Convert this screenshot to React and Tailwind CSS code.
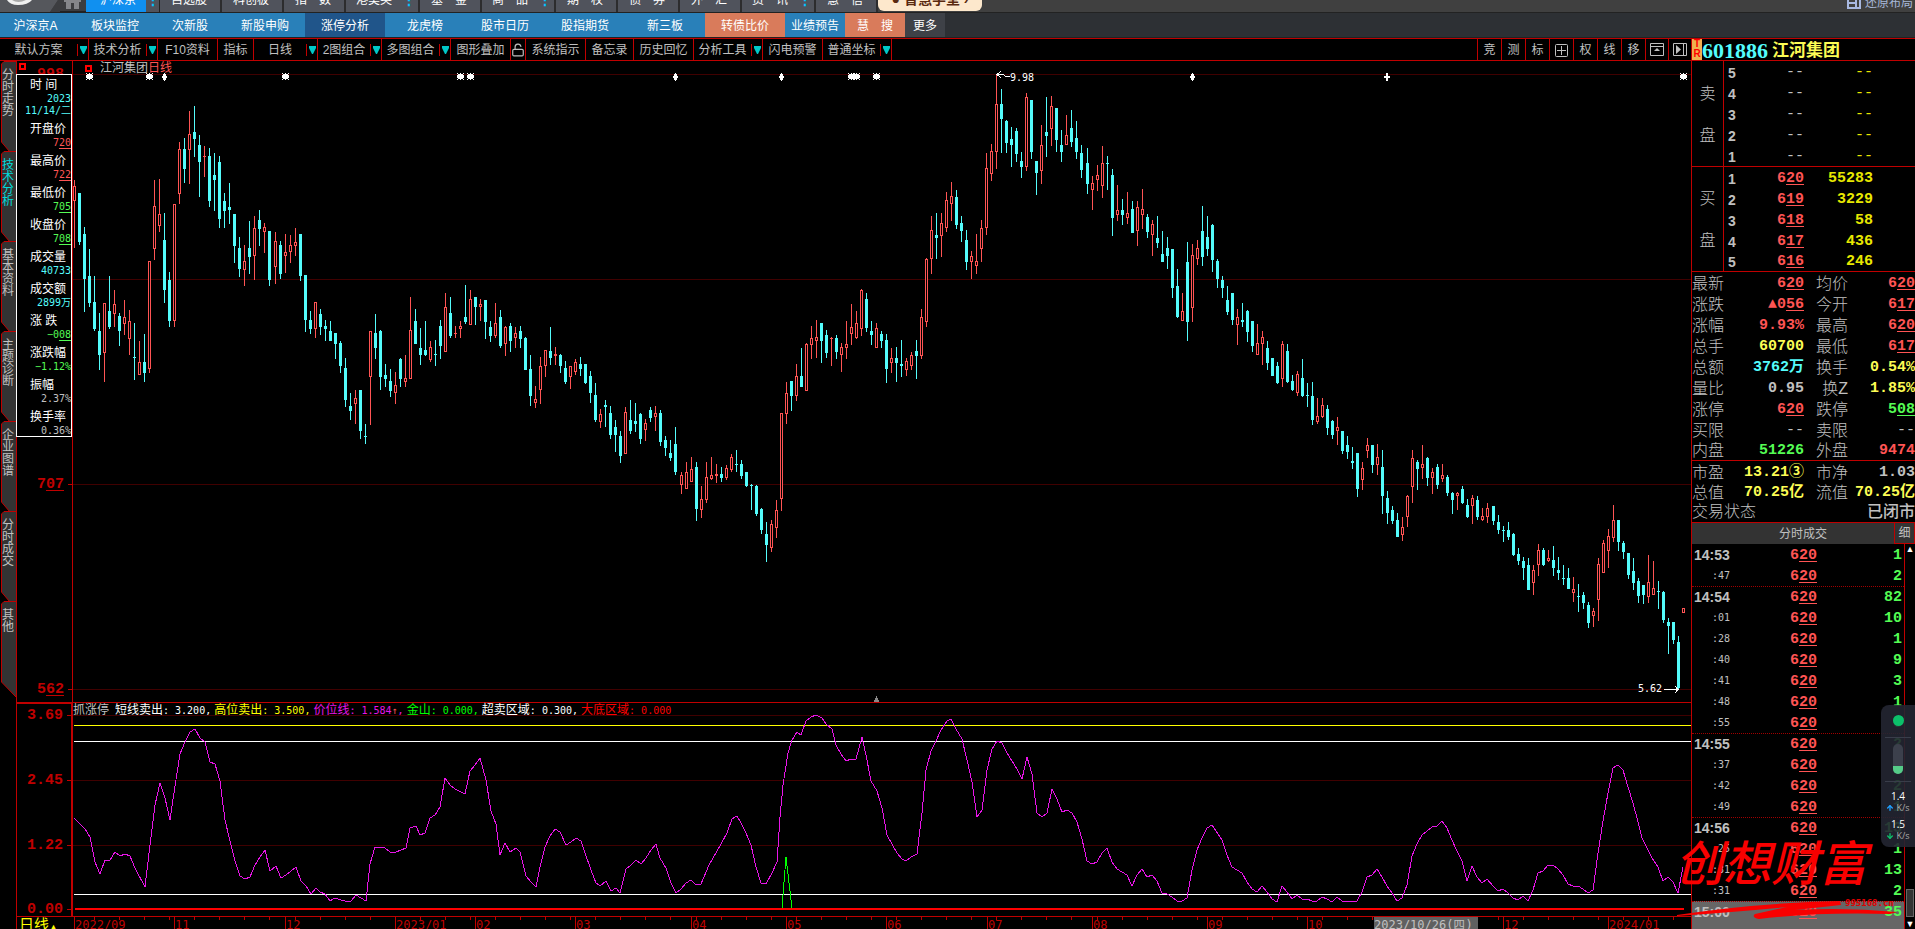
// src/App.jsx
import React from 'react';
import { LockOpen, ArrowUp, ArrowDown } from 'lucide-react';

const MONO = "font-['Liberation_Mono','Noto_Sans_CJK_SC',monospace]";
const SMALL = "font-['DejaVu_Sans_Mono','Noto_Sans_CJK_SC',monospace] text-[10px]";

const marketTabs = [
  { label: '自选股', w: 'w-[62px]' },
  { label: '科创板', w: 'w-[62px]' },
  { label: '指　数', w: 'w-[62px]' },
  { label: '港美英', w: 'w-[74px]', dots: true },
  { label: '基　金', w: 'w-[62px]' },
  { label: '商　品', w: 'w-[74px]', dots: true },
  { label: '期　权', w: 'w-[62px]' },
  { label: '债　券', w: 'w-[62px]' },
  { label: '外　汇', w: 'w-[62px]' },
  { label: '资　讯', w: 'w-[74px]', dots: true },
  { label: '慧　信', w: 'w-[62px]' },
];

const subTabs = [
  { label: '沪深京A', cls: 'w-[75px] pr-1' },
  { label: '板块监控', cls: 'w-20' },
  { label: '次新股', cls: 'w-[70px]' },
  { label: '新股申购', cls: 'w-20' },
  { label: '涨停分析', cls: 'w-20 bg-[#20558a]' },
  { label: '龙虎榜', cls: 'w-20' },
  { label: '股市日历', cls: 'w-20' },
  { label: '股指期货', cls: 'w-20' },
  { label: '新三板', cls: 'w-20' },
  { label: '转债比价', cls: 'w-20 bg-[#d97b5b]' },
  { label: '业绩预告', cls: 'w-[60px]' },
  { label: '慧　搜', cls: 'w-[60px] bg-[#d97b5b]' },
  { label: '更多', cls: 'w-10 bg-[#3e4147]' },
];

const tools = [
  { label: '默认方案', w: 'w-[89px]', drop: true },
  { label: '技术分析', w: 'w-[69px]', drop: true },
  { label: 'F10资料', w: 'w-[60px]' },
  { label: '指标', w: 'w-9' },
  { label: '日线', w: 'w-16', drop: true },
  { label: '2图组合', w: 'w-16', drop: true },
  { label: '多图组合', w: 'w-[69px]', drop: true },
  { label: '图形叠加', w: 'w-[60px]' },
  { label: 'lock', w: 'w-[15px]' },
  { label: '系统指示', w: 'w-[60px]' },
  { label: '备忘录', w: 'w-12' },
  { label: '历史回忆', w: 'w-[60px]' },
  { label: '分析工具', w: 'w-[69px]', drop: true },
  { label: '闪电预警', w: 'w-[60px]' },
  { label: '普通坐标', w: 'w-[69px]', drop: true },
];

const sideTabs = ['分时走势', '技术分析', '基本资料', '主题诊断', '企业图谱', '分时成交', '其他'];

const cursorInfo = [
  ['开盘价', '720', 'text-[#ff5454]', true],
  ['最高价', '722', 'text-[#ff5454]', true],
  ['最低价', '705', 'text-[#54fc54]', true],
  ['收盘价', '708', 'text-[#54fc54]', true],
  ['成交量', '40733', 'text-[#54fcfc]'],
  ['成交额', '2899万', 'text-[#54fcfc]'],
  ['涨 跌', '−008', 'text-[#54fc54]', true],
  ['涨跌幅', '−1.12%', 'text-[#54fc54]'],
  ['振幅', '2.37%', 'text-[#c0c0c0]'],
  ['换手率', '0.36%', 'text-[#c0c0c0]'],
];

const sells = [5, 4, 3, 2, 1];
const buys = [
  [1, '620', '55283'],
  [2, '619', '3229'],
  [3, '618', '58'],
  [4, '617', '436'],
  [5, '616', '246'],
];

const R = 'text-[#ff5454]';
const Y = 'text-[#fcfc54]';
const C = 'text-[#54fcfc]';
const G = 'text-[#54fc54]';
const W = 'text-[#c0c0c0]';

const quoteA = [
  ['最新', '620', R, '均价', '620', R],
  ['涨跌', '▲056', R, '今开', '617', R],
  ['涨幅', '9.93%', R, '最高', '620', R],
  ['总手', '60700', Y, '最低', '617', R],
  ['总额', '3762万', C, '换手', '0.54%', Y],
  ['量比', '0.95', W, ' 换Z', '1.85%', Y],
  ['涨停', '620', R, '跌停', '508', G],
  ['买限', '--', W, '卖限', '--', W],
  ['内盘', '51226', G, '外盘', '9474', R],
];
const quoteB = [
  ['市盈', '13.21③', Y, '市净', '1.03', W],
  ['总值', '70.25亿', Y, '流值', '70.25亿', Y],
];

const trades = [
  ['14:53', 1], [':47', 2], ['14:54', 82], [':01', 10], [':28', 1], [':40', 9],
  [':41', 3], [':48', 1], [':55', 6], ['14:55', 2], [':37', 1], [':42', 2],
  [':49', 1], ['14:56', 13], [':25', 1], [':31', 13], [':31', 2], ['15:00', 35],
];

const months = [
  [74, '2022/09'], [174, '11'], [285, '12'], [395, '2023/01'], [475, '02'],
  [575, '03'], [691, '04'], [786, '05'], [886, '06'], [987, '07'], [1092, '08'],
  [1207, '09'], [1307, '10'], [1503, '12'], [1608, '2024/01'],
];

// r = up, c = down; then high, body top, body bottom, low
const candles = `
r180 186 201 248,c193 193 242 245,c227 234 279 312,c249 276 303 307,c276 302 329 331,c313 331 355 370,
r303 303 353 382,c276 311 327 329,r290 304 314 327,c313 316 331 346,r300 317 324 335,r310 321 339 355,
c323 357 358 380,r341 362 375 375,c334 362 373 382,r261 261 369 373,r180 206 249 260,r179 214 226 232,
c213 240 290 303,c272 280 321 327,r204 204 321 327,r142 149 194 204,c138 149 169 183,r111 134 150 184,
c106 132 139 157,c135 145 162 197,r146 156 157 177,c148 156 201 207,c153 175 180 211,c156 162 219 228,
c193 201 211 228,c183 207 210 224,c214 214 246 263,c237 248 269 277,r245 261 270 286,c221 248 257 274,
r216 228 256 280,c210 220 229 246,r223 227 232 253,c231 231 280 286,r232 241 267 284,c241 245 274 279,
r234 252 256 273,r235 245 252 263,r228 242 246 256,c234 234 276 281,c275 275 320 332,c311 320 329 334,
r302 302 329 338,c309 314 327 335,c320 326 329 341,c321 331 341 341,c333 333 344 359,c341 343 366 373,
c358 368 400 407,c393 406 411 420,r390 398 404 424,c390 390 431 439,c424 436 437 444,r331 331 377 425,
c314 333 348 359,c330 331 377 390,c364 375 379 387,c369 381 391 397,r372 385 393 404,c358 359 379 387,
r355 378 382 387,r297 330 379 379,c309 321 344 344,c328 348 355 365,c321 350 355 356,r341 347 360 362,
c340 354 355 366,c320 326 346 359,r293 307 352 352,c297 313 336 338,r326 333 334 338,r321 326 329 338,
c285 317 322 324,r290 299 325 325,c297 297 307 325,r299 304 307 321,c300 300 322 339,c321 327 336 342,
r303 323 336 338,c310 317 346 348,r326 327 344 356,c323 326 341 352,r327 333 338 348,c326 331 339 348,
c337 338 370 370,c355 369 396 406,r386 399 403 408,r357 366 390 404,r350 350 366 377,c327 351 358 365,
r347 354 356 365,c354 355 366 373,c361 368 382 384,r366 366 377 389,r359 362 372 375,c357 364 369 376,
c364 364 383 384,c371 376 393 403,c383 395 420 422,r409 414 422 428,c400 405 407 427,c406 413 435 439,
c420 427 435 452,c431 436 456 463,r407 412 454 454,c400 420 431 434,c403 421 424 432,c413 414 439 444,
r419 423 430 441,c407 410 418 422,r406 413 417 431,c410 413 442 446,c436 440 448 456,c440 453 458 461,
c427 444 472 475,r472 475 485 494,r462 472 489 489,r457 469 482 482,c462 467 509 521,r486 499 510 518,
r462 477 500 503,r457 475 479 480,r464 474 476 483,c467 474 478 482,r465 468 478 480,r454 457 470 472,
c450 464 465 472,c460 464 476 479,c472 472 486 487,c484 485 486 510,c485 486 514 516,c508 509 530 534,
c522 534 545 562,r520 524 548 552,r500 510 528 538,r413 413 499 511,r382 393 414 424,c381 381 396 411,
r364 376 396 401,c348 376 387 387,r343 344 391 391,r326 338 345 359,r320 337 341 358,c323 323 341 363,
c330 335 353 358,r337 338 339 366,c335 338 352 359,r343 347 355 372,r321 344 348 359,r304 327 334 345,
r311 323 338 339,r289 290 329 336,c293 299 328 332,c321 331 335 345,r323 328 348 348,c331 334 341 348,
c334 340 369 383,r348 358 363 373,c347 358 363 382,c340 364 366 377,r358 361 370 376,r352 355 366 370,
c340 351 356 379,r309 317 356 359,r258 259 322 327,r216 230 259 274,c213 235 238 259,r213 223 236 257,
r192 200 228 232,r182 196 204 221,c190 197 225 229,c216 223 231 242,c230 240 262 270,r251 256 262 279,
r234 261 266 274,r220 228 249 262,r153 168 228 235,r144 151 174 181,r74 104 152 169,c89 104 119 153,
c120 121 143 153,c127 139 145 167,c128 131 154 162,c152 161 167 178,r93 97 167 171,c100 100 152 159,
c161 161 173 195,r125 145 171 184,c97 132 136 157,r96 106 129 146,c108 108 140 152,c130 145 152 162,
r115 135 145 145,c110 128 142 147,c121 138 152 159,c145 153 170 178,c148 163 184 194,r176 183 190 210,
r165 175 180 191,r146 163 186 198,c156 163 164 190,c169 175 218 236,r185 210 215 221,c199 210 215 225,
r192 213 218 224,c201 209 233 233,r201 207 231 246,r189 209 215 229,c214 217 232 238,r220 224 235 256,
c216 238 243 248,c231 254 262 262,c237 248 256 269,c249 249 288 298,c269 286 317 318,r293 311 321 321,
c242 262 322 341,r244 255 308 322,r240 248 259 265,c206 231 257 266,c216 237 249 256,c224 225 260 272,
c259 261 279 288,c276 280 288 298,c286 300 312 315,c293 293 320 325,r309 317 325 345,c303 320 322 327,
c310 311 332 342,c321 321 346 352,r324 343 355 355,r331 337 344 365,c341 348 363 370,c358 358 376 376,
c362 366 383 384,r341 344 379 387,c344 351 382 383,c375 381 390 391,r371 374 393 396,c359 378 396 397,
c383 395 396 407,c382 396 420 425,r398 416 422 424,r398 405 417 418,c405 409 428 435,c420 421 435 439,
r417 427 431 445,c431 431 451 454,c436 445 452 459,c447 461 463 469,c453 453 489 497,r462 468 480 490,
r438 445 451 458,c445 445 465 473,r444 457 465 475,c450 467 496 514,c491 498 513 524,c506 510 521 524,
c513 520 537 537,r517 527 535 541,r495 496 517 527,r450 458 487 503,c460 462 469 490,r445 464 468 479,
c457 458 478 486,r468 472 478 494,c464 467 485 489,r464 475 479 482,c475 477 493 496,c492 493 500 514,
r492 493 496 510,c486 489 503 504,c499 505 517 518,r495 498 506 524,c496 500 517 520,r508 516 520 521,
r503 508 517 523,c506 506 521 525,c515 522 530 534,c526 530 531 542,c522 530 537 540,c533 534 555 556,
c548 554 561 565,c557 561 568 580,c558 565 590 590,r565 570 583 595,r544 550 565 576,c548 550 565 566,
r550 558 561 562,c546 560 568 576,c557 570 573 580,c565 578 579 585,c568 578 589 589,r577 589 593 602,
c584 596 597 612,c592 595 603 609,c602 605 623 628,r608 611 616 627,r558 564 600 621,r540 543 573 573,
r529 536 551 568,r505 520 538 542,c520 520 542 551,c541 543 552 559,c553 553 575 579,c558 571 583 590,
c578 581 596 603,c585 585 595 604,r555 582 597 603,r561 588 595 595,c581 591 592 609,c591 592 620 623,
c618 622 626 654,c622 622 640 644,c636 642 688 690,r608 608 613 613
`
  .trim()
  .split(/,\s*/)
  .map((s, i) => {
    const [high, top, bottom, low] = s.slice(1).split(' ').map(Number);
    return { up: s[0] === 'r', high, top, bottom, low, x: 74 + i * 5 + Math.floor((i + 41) / 81) };
  });

const priceLine =
  '74,818 79,823 85,829 90,837 95,862 100,874 105,860 110,860 115,852 120,856 125,854 130,856 135,868 145,887 150,845 155,805 160,783 165,798 170,820 175,786 180,754 185,742 190,732 195,729 200,738 205,742 210,762 215,764 220,781 225,820 230,841 235,861 240,876 245,879 250,877 255,865 260,857 265,850 270,871 276,866 281,878 286,875 296,867 301,881 306,886 311,894 316,888 320,892 325,894 330,901 335,898 341,900 345,901 351,901 356,895 361,898 366,901 370,864 375,847 385,848 390,852 396,852 406,848 410,828 416,826 420,835 425,833 430,818 435,815 440,807 445,778 450,785 455,789 465,794 470,771 475,765 480,758 486,780 491,811 496,824 500,855 505,843 510,852 516,848 520,852 526,876 531,882 536,887 540,867 545,847 550,836 555,829 560,832 566,845 571,842 576,838 581,841 585,853 591,870 596,883 600,886 606,881 611,891 616,888 620,893 626,869 631,865 636,860 641,864 646,858 651,850 656,844 660,858 666,868 671,883 676,893 681,889 686,883 691,880 696,885 701,884 709,865 721,844 727,833 732,819 737,816 741,823 746,833 751,845 756,867 761,883 766,884 772,873 777,862 780,817 783,785 788,753 792,740 797,732 801,735 806,721 811,717 816,715 822,718 826,724 832,729 836,745 841,754 846,761 851,759 856,759 862,737 866,755 871,781 877,791 882,808 887,835 892,844 897,853 902,859 906,861 911,857 917,854 922,813 926,770 931,751 936,741 941,730 947,721 951,719 956,729 962,739 967,760 972,782 977,817 982,810 987,770 992,749 997,741 1002,743 1007,753 1012,761 1017,769 1022,779 1027,757 1032,774 1037,813 1042,817 1047,813 1052,789 1057,799 1062,812 1067,810 1072,813 1077,822 1082,839 1087,861 1092,864 1097,862 1102,853 1107,848 1112,862 1117,869 1127,875 1132,886 1137,875 1142,869 1147,877 1152,875 1157,881 1162,893 1167,894 1172,897 1177,901 1182,901 1187,898 1192,870 1197,850 1202,838 1207,828 1212,825 1222,840 1227,855 1232,867 1242,873 1247,882 1252,889 1257,892 1262,886 1267,892 1272,899 1277,902 1282,886 1287,892 1292,899 1297,895 1302,899 1307,899 1312,901 1317,901 1322,897 1327,899 1332,902 1337,897 1342,901 1347,901 1352,902 1357,901 1362,892 1367,877 1372,875 1377,869 1382,877 1387,886 1392,893 1397,901 1402,898 1407,885 1412,856 1417,844 1422,835 1432,827 1437,826 1442,821 1447,828 1452,840 1457,851 1462,861 1467,881 1472,866 1477,877 1482,883 1487,879 1493,886 1498,891 1503,889 1508,893 1513,898 1518,900 1523,896 1528,901 1533,890 1538,873 1543,871 1548,865 1553,865 1558,869 1563,875 1568,884 1573,886 1578,886 1583,889 1588,893 1593,890 1598,853 1603,821 1608,793 1613,768 1618,765 1623,770 1628,787 1633,803 1638,822 1642,838 1647,848 1652,858 1658,867 1663,881 1668,877 1673,882 1678,893 1683,867';

const stars = [89, 149, 285, 460, 470, 851, 856, 876, 1683];
const diamonds = [164, 675, 781, 1192];

const pctX = (x) => `${((x - 73) / 1618) * 100}%`;
const pctY = (y) => `${((y - 61) / 641) * 100}%`;

// Prices are quoted in cents, with the last two digits underlined
const Price = ({ v }) => (
  <>
    {v.slice(0, -2)}
    <span className="underline decoration-1 underline-offset-2">{v.slice(-2)}</span>
  </>
);

const isPrice = (v) => /^[▲−]?\d{3}$/.test(v);
const Value = ({ v }) => {
  if (v === '--') return <span className="font-normal">--</span>;
  return isPrice(v) ? <Price v={v} /> : v;
};

const Dots = () => <span className="text-[#00c0ff] text-sm font-bold leading-none">⋮</span>;

const MarketBar = () => (
  <nav className="h-[13px] shrink-0 overflow-hidden flex items-end bg-[#404040] border-b border-[#222] text-xs text-white">
    <svg width="86" height="12" viewBox="0 0 86 12" className="shrink-0" aria-hidden="true">
      <path d="M0 0H58L50 12H0Z" fill="#55575c" />
      <path d="M58 0L50 12H86V0Z" fill="#3c3d40" />
      <path d="M60 11H86V12H60Z" fill="#222" />
      <path d="M7 0Q10 5 18 5Q28 5 32 0Z" fill="#f0f0f0" />
      <path d="M12 0Q18 4 26 0Z" fill="#a8a8a8" />
      <path d="M64 0H81V2H79V9H74V3H71V9H66V2H64Z" fill="#85868a" />
    </svg>
    <button className="w-[60px] h-6 bg-[#1090f0]">
      <span className="pl-1">沪深京</span>
    </button>
    <div className="w-[14px] h-6 flex items-center justify-center bg-[#50535c] border-r border-[#222]">
      <Dots />
    </div>
    {marketTabs.map((t) => (
      <button
        key={t.label}
        className={`${t.w} h-6 flex items-center justify-between border-r-2 border-[#2c2c2e] bg-[#50535c] pr-0.5`}
      >
        <span className="flex-1 text-center">{t.label}</span>
        {t.dots && <Dots />}
      </button>
    ))}
    <button className="w-[104px] h-6 mb-px rounded-b-md bg-[#fde8cc] text-[#5a2a10] text-sm font-bold whitespace-nowrap">
      ● 智慧学堂 ›
    </button>
    <button className="ml-auto w-[68px] h-[18px] flex items-center gap-1 text-[#a8b8d8] whitespace-nowrap">
      <svg width="14" height="12" viewBox="0 0 14 12" className="shrink-0" aria-hidden="true">
        <path d="M1 1H13V11H1Z M1 6H8 M9 1V11" fill="none" stroke="#a8b8e0" strokeWidth="2" />
      </svg>
      <span>还原布局</span>
    </button>
  </nav>
);

const SubBar = () => (
  <nav className="h-[25px] shrink-0 flex bg-[#2d3034] border-b border-[#222] text-xs text-white">
    <div className="flex bg-[#2980b9]">
      {subTabs.map((t) => (
        <button key={t.label} className={`${t.cls} h-6 pt-0.5 whitespace-nowrap`}>
          {t.label}
        </button>
      ))}
    </div>
  </nav>
);

const Toolbar = () => (
  <div className="h-[23px] flex-1 flex border-y border-[#c00000] text-xs text-[#c0c0c0]">
    {tools.map((t) => (
      <button
        key={t.label}
        aria-label={t.label}
        className={`${t.w} flex items-center border-r border-[#c00000] whitespace-nowrap`}
      >
        <span className="flex-1 flex justify-center pt-px">
          {t.label === 'lock' ? <LockOpen size={14} strokeWidth={2} /> : t.label}
        </span>
        {t.drop && (
          <span className="w-[11px] h-3 border-l border-[#c00000] flex justify-center pt-0.5">
            <svg width="7" height="8" viewBox="0 0 7 8" aria-hidden="true">
              <path d="M0 0H7V2L4 8H3L0 2Z" fill="#00c8c8" />
            </svg>
          </span>
        )}
      </button>
    ))}
    <div className="ml-auto flex">
      {['竞', '测', '标', '田', '权', '线', '移'].map((s) => (
        <button key={s} className="w-6 pt-px border-l border-[#c00000] flex items-center justify-center">
          {s === '田' ? (
            <svg width="13" height="13" viewBox="0 0 13 13" aria-hidden="true">
              <rect x=".5" y=".5" width="12" height="12" rx="1" fill="none" stroke="#c0c0c0" />
              <path d="M6.5 2V11M2 6.5H11" stroke="#c0c0c0" />
            </svg>
          ) : (
            s
          )}
        </button>
      ))}
      <button className="w-[23px] border-l border-[#c00000] flex items-center justify-center" aria-label="展开">
        <svg width="14" height="13" viewBox="0 0 14 13" aria-hidden="true">
          <path d="M.5 .5H13.5V12.5H.5Z M.5 3.5H13.5" fill="none" stroke="#c0c0c0" />
          <path d="M4 8L7 5L10 8Z" fill="#c0c0c0" />
        </svg>
      </button>
      <button className="w-[23px] border-l border-[#c00000] flex items-center justify-center" aria-label="右移">
        <svg width="14" height="13" viewBox="0 0 14 13" aria-hidden="true">
          <path d="M.5 .5H13.5V12.5H.5Z M10.5 .5V12.5" fill="none" stroke="#c0c0c0" />
          <path d="M3 2L8 6.5L3 11Z" fill="#c0c0c0" />
        </svg>
      </button>
    </div>
  </div>
);

const SideTabs = () => (
  <aside className="w-[17px] shrink-0 border-r border-[#c00000] overflow-hidden">
    {sideTabs.map((t, i) => (
      <button key={t} className="relative block w-4 h-[90px] text-xs leading-3">
        <svg
          className="absolute inset-0 overflow-visible"
          width="16"
          height="98"
          viewBox="0 0 16 98"
          aria-hidden="true"
        >
          <path
            d={i === 6 ? 'M16 .5H4L1.5 3V81L16 96' : 'M16 .5H4L1.5 3V81L9.5 90.5H16'}
            fill="#333"
            stroke="#c00000"
          />
        </svg>
        <span
          className={`absolute left-0.5 top-2 w-3 break-all ${i === 1 ? 'text-[#00dcdc]' : 'text-[#c0c0c0]'}`}
        >
          {t}
        </span>
      </button>
    ))}
  </aside>
);

const CursorBox = () => (
  <div className="absolute z-10 -left-px top-[13px] w-14 h-[363px] border border-white bg-black text-xs text-white">
    <div className="h-[46px] pt-0.5">
      <div className="h-4 leading-4 pl-[13px]">时 间</div>
      <div className={`${SMALL} text-right leading-3 text-[#54fcfc]`}>
        2023
        <br />
        11/14/二
      </div>
    </div>
    {cursorInfo.map(([label, v, color, under]) => (
      <div key={label} className="h-8">
        <div className="h-4 leading-4 pl-[13px]">{label}</div>
        <div className={`${SMALL} h-4 leading-3 text-right ${color}`}>{under ? <Price v={v} /> : v}</div>
      </div>
    ))}
  </div>
);

const AxisLabel = ({ top, children }) => (
  <div className="absolute right-0 h-4 -mt-2 flex items-center gap-1" style={{ top }}>
    <span className={`${MONO} pt-0.5 text-[15px] leading-4 font-bold text-[#c00000]`}>{children}</span>
    <span className="w-1 h-px bg-[#c00000]" />
  </div>
);

const Axis = () => (
  <div className="w-14 shrink-0 flex flex-col">
    <div className="relative flex-1 border-r border-[#c00000]">
      <span className="absolute left-0.5 top-0.5 w-[7px] h-[7px] border-2 border-[#f00]" />
      <AxisLabel top={pctY(74)}>
        <Price v="998" />
      </AxisLabel>
      <AxisLabel top={pctY(484)}>
        <Price v="707" />
      </AxisLabel>
      <AxisLabel top={pctY(689)}>
        <Price v="562" />
      </AxisLabel>
      <CursorBox />
    </div>
    <div className="relative h-[215px] border-2 border-l-0 border-b border-[#c00000]">
      <AxisLabel top="11px">3.69</AxisLabel>
      <AxisLabel top="76px">2.45</AxisLabel>
      <AxisLabel top="141px">1.22</AxisLabel>
      <AxisLabel top="205px">0.00</AxisLabel>
    </div>
    <button className="h-3 pl-0.5 overflow-hidden text-left whitespace-nowrap text-[15px] leading-[15px] text-[#ff0]">
      日线<span className="text-[9px]">▲</span>
    </button>
  </div>
);

const PriceChart = () => (
  <div className="relative flex-1 min-h-0">
    <svg
      className="absolute inset-0 w-full h-full"
      viewBox="73 61 1618 641"
      preserveAspectRatio="none"
      shapeRendering="crispEdges"
      role="img"
      aria-label="江河集团 日线"
    >
      {[74, 279, 484, 689].map((y) => (
        <rect key={y} x="73" y={y} width="1618" height="1" fill="#400000" />
      ))}
      {candles.map((c) => (
        <g key={c.x} fill={c.up ? '#ff5454' : '#54fcfc'}>
          <rect x={c.x} y={c.high} width="1" height={c.low - c.high} />
          <rect x={c.x - 1} y={c.top} width="3" height={c.bottom - c.top} />
          {c.up && c.bottom - c.top > 2 && (
            <rect x={c.x} y={c.top + 1} width="1" height={c.bottom - c.top - 2} fill="#000" />
          )}
        </g>
      ))}
      {stars.map((x) => (
        <path
          key={x}
          fill="#fff"
          d={`M${x - 2} 74h5v5h-5z M${x - 3} 75h7v3h-7z M${x - 3} 73h1v1h-1z M${x + 3} 73h1v1h-1z M${x - 3} 79h1v1h-1z M${x + 3} 79h1v1h-1z M${x} 73h1v7h-1z`}
        />
      ))}
      {diamonds.map((x) => (
        <path key={x} fill="#fff" d={`M${x} 73h1v8h-1z M${x - 1} 74h3v6h-3z M${x - 2} 76h5v2h-5z`} />
      ))}
      <path d="M1386 73h2v8h-2z M1384 76h6v2h-6z" fill="#fff" />
      <path d="M1001 71L997 74.5L1001 78M997 74.5H1003L1006 76.5H1010" fill="none" stroke="#fff" />
      <path d="M1664 689.5H1678M1675 686L1678 689.5L1675 693" fill="none" stroke="#fff" />
      <path d="M876 696h1v2h1v2h1v2h-5v-2h1v-2h1z" fill="#888" />
    </svg>
    <div className="relative flex items-center h-3.5 pl-3 text-xs leading-3 text-[#c0c0c0]">
      <span className="w-[7px] h-[7px] mr-2 border-2 border-[#f00]" />
      江河集团<span className="text-[#ff5454]">日线</span>
    </div>
    <span
      className={`${SMALL} absolute leading-3 -mt-1.5 text-white`}
      style={{ left: pctX(1010), top: pctY(78) }}
    >
      9.98
    </span>
    <span
      className={`${SMALL} absolute leading-3 -mt-1.5 text-white`}
      style={{ left: pctX(1638), top: pctY(689) }}
    >
      5.62
    </span>
  </div>
);

const indicatorLegend = [
  ['短线卖出', '3.200', 'text-white'],
  ['高位卖出', '3.500', 'text-[#ff0]'],
  ['价位线', '1.584', 'text-[#e815e8]', true],
  ['金山', '0.000', 'text-[#0f0]'],
  ['超卖区域', '0.300', 'text-white'],
  ['大底区域', '0.000', 'text-[#f00]'],
];

const Indicator = () => (
  <div className="relative h-[215px] shrink-0">
    <svg
      className="absolute inset-0 w-full h-full"
      viewBox="73 702 1618 215"
      preserveAspectRatio="none"
      shapeRendering="crispEdges"
      aria-hidden="true"
    >
      <path d="M73 702h1618v1H73z M73 916h1618v1H73z" fill="#c00000" />
      <path d="M73 715h1618v1H73z M73 780h1618v1H73z M73 845h1618v1H73z" fill="#400000" />
      <rect x="74" y="725" width="1617" height="1" fill="#ff0" />
      <rect x="74" y="741" width="1617" height="1" fill="#fff" />
      <rect x="74" y="894" width="1617" height="1" fill="#fff" />
      <polyline points={priceLine} fill="none" stroke="#e815e8" />
      <path d="M782 908L786 857L792 908" fill="none" stroke="#0f0" />
      <rect x="75" y="908" width="1609" height="2" fill="#f00" />
    </svg>
    <div className="relative flex items-center h-3.5 pt-0.5 text-xs leading-3 whitespace-nowrap">
      <span className="w-[42px] text-[#c0c0c0]">抓涨停</span>
      {indicatorLegend.map(([label, v, color, up], i) => (
        <span key={label} className={`${color} mr-[3px]`}>
          {label}
          <span className={SMALL}>
            : {v}
            {up && <span className="text-[#ff5454]">↑</span>}
            {i < 5 && ','}
          </span>
        </span>
      ))}
    </div>
  </div>
);

const DateAxis = () => (
  <div className="relative h-3 shrink-0 overflow-hidden font-['DejaVu_Sans_Mono',monospace] text-xs leading-4 text-[#c00000]">
    {candles
      .filter((c, i) => i % 5 === 4)
      .map((c) => (
        <span key={c.x} className="absolute top-0 w-px h-[3px] bg-[#c00000]" style={{ left: pctX(c.x) }} />
      ))}
    {months.map(([x, label]) => (
      <span key={x} className="absolute top-0 border-l border-[#c00000]" style={{ left: pctX(x) }}>
        {label}
      </span>
    ))}
    <span
      className="absolute top-0 w-[104px] bg-[#606060] text-[#c0c0c0] whitespace-nowrap"
      style={{ left: pctX(1374) }}
    >
      2023/10/26(四)
    </span>
  </div>
);

const BookSide = ({ name, children }) => (
  <div className="flex border-b border-[#c00000]">
    <div className="w-8 pt-0.5 flex flex-col items-center justify-center gap-[26px] border-r border-[#c00000] text-base leading-4 font-light text-[#c0c0c0]">
      <span>{name}</span>
      <span>盘</span>
    </div>
    <table className={`flex-1 ${MONO} text-[15px] font-bold`}>
      <tbody>{children}</tbody>
    </table>
  </div>
);

const BookRow = ({ n, price, vol, last }) => (
  <tr className={`${last ? 'h-5' : 'h-[21px]'} pt-0.5 flex items-center leading-5`}>
    <td className="w-10 pl-1 font-['Liberation_Sans'] text-[14px] text-[#c0c0c0]">{n}</td>
    <td className={`w-10 text-right ${price === '--' ? W : R}`}>
      <Value v={price} />
    </td>
    <td className="w-[69px] text-right text-[#e8e800]">
      <Value v={vol.length === 3 ? `${vol} ` : vol} />
    </td>
  </tr>
);

const QuoteRows = ({ rows }) => (
  <dl className="border-b border-[#c00000]">
    {rows.map(([l1, v1, c1, l2, v2, c2]) => (
      <div
        key={l1}
        className="h-[21px] last:h-5 pt-0.5 flex items-center text-base leading-5 font-light text-[#c0c0c0] whitespace-nowrap"
      >
        <dt className="w-8">{l1}</dt>
        <dd className={`w-20 text-right ${MONO} text-[15px] font-bold ${c1}`}>
          <Value v={v1} />
        </dd>
        <dt className="w-8 ml-3 text-right">{l2}</dt>
        <dd className={`flex-1 flex justify-end ${MONO} text-[15px] font-bold ${c2}`}>
          <span>
            <Value v={v2} />
          </span>
        </dd>
      </div>
    ))}
  </dl>
);

const Trades = () => (
  <div className="flex-1 min-h-0 flex overflow-hidden">
    <ul className={`flex-1 flex flex-col border-r border-[#c00000] ${MONO} text-[15px] font-bold`}>
      {trades.map(([time, vol], i) => {
        const full = time.length > 3;
        const last = i === trades.length - 1;
        return (
          <li
            key={i}
            className={`shrink-0 flex leading-[22px] px-0.5 h-[21px] ${last ? 'grow bg-[#666]' : ''} ${
              full && i > 0 ? 'border-t border-dotted border-[#a00000]' : 'pt-px'
            }`}
          >
            <span
              className={
                full
                  ? "w-9 font-['Liberation_Sans'] text-[14px] leading-5 text-[#c0c0c0]"
                  : "w-9 text-right font-['DejaVu_Sans_Mono'] text-[10px] leading-5 font-normal text-[#c0c0c0]"
              }
            >
              {time}
            </span>
            <span className="w-[87px] text-right text-[#ff5454]">
              <Price v="620" />
            </span>
            <span className="flex-1 text-right text-[#54fc54]">{vol}</span>
          </li>
        );
      })}
    </ul>
    <div className="w-2.5 flex flex-col items-center text-white">
      <button className="h-2.5 text-[9px] leading-[10px]" aria-label="向上">▲</button>
      <span className="mt-auto w-2 h-7 mb-0.5 bg-[#333] border border-[#666]" />
      <button className="h-2.5 text-[9px] leading-[10px]" aria-label="向下">▼</button>
    </div>
  </div>
);

const QuotePanel = () => (
  <section className="w-56 shrink-0 flex flex-col min-h-0 border-l border-[#c00000]">
    <BookSide name="卖">
      {sells.map((n) => (
        <BookRow key={n} n={n} price="--" vol="--" />
      ))}
    </BookSide>
    <BookSide name="买">
      {buys.map(([n, p, v]) => (
        <BookRow key={n} n={n} price={p} vol={v} last={n === 5} />
      ))}
    </BookSide>
    <QuoteRows rows={quoteA} />
    <div>
      <QuoteRows rows={quoteB} />
    </div>
    <div className="h-5 -mt-px flex items-center justify-between bg-black text-base leading-5 font-light text-[#c0c0c0]">
      <span>交易状态</span>
      <span className="font-medium">已闭市</span>
    </div>
    <div className="h-[22px] shrink-0 flex border-t border-[#c00000] bg-[#333] text-xs text-[#c0c0c0]">
      <h2 className="flex-1 flex items-center justify-center pl-5">分时成交</h2>
      <button className="w-[21px] border border-t-0 border-[#c00000]">细</button>
    </div>
    <Trades />
  </section>
);

const NetWidget = () => (
  <div className="absolute right-0 top-[705px] w-[34px] h-[142px] rounded-l-lg bg-[#232632]/90 flex flex-col items-center font-['Open_Sans'] text-[10px] text-white">
    <span className="mt-2.5 size-[11px] rounded-full bg-[#0cc06a]" />
    <span className="mt-[11px] w-[26px] h-px bg-[#393d4a]" />
    <span className="mt-1.5 w-2.5 h-[30px] rounded-full bg-[#3c404c] overflow-hidden flex items-end">
      <span className="w-full h-2 bg-[#55cc88]" />
    </span>
    <span className="mt-[7px] w-[26px] h-px bg-[#393d4a]" />
    <span className="mt-2 leading-3">1.4</span>
    <span className="flex items-center gap-0.5 leading-3 text-[9px] text-[#aaa]">
      <ArrowUp size={8} strokeWidth={4} className="text-[#20a0ff]" />
      K/s
    </span>
    <span className="mt-1 leading-3">1.5</span>
    <span className="flex items-center gap-0.5 leading-3 text-[9px] text-[#aaa]">
      <ArrowDown size={8} strokeWidth={4} className="text-[#0cc06a]" />
      K/s
    </span>
  </div>
);

const Watermark = () => (
  <div className="absolute right-0 bottom-0 w-[240px] h-[94px] pointer-events-none text-[#f80000]">
    <p className="font-medium italic text-[48px] leading-[60px] whitespace-nowrap">创想财富</p>
    <svg className="absolute left-0 bottom-0" width="240" height="40" viewBox="0 0 240 40" aria-hidden="true">
      <path
        d="M2 26Q80 14 165 12L166 16L120 21Q170 18 222 23L215 25Q140 23 84 30Q76 28 80 25L112 18Q60 23 2 27Z"
        fill="#f80000"
      />
    </svg>
    <p className="absolute left-[170px] top-[62px] font-['DejaVu_Sans_Mono'] text-[9px] font-bold leading-3 text-[#e00000]">
      995168.cn
    </p>
  </div>
);

const App = () => {
  return (
    <div className="relative h-screen flex flex-col overflow-hidden bg-black font-['Liberation_Sans','Noto_Sans_CJK_SC',sans-serif]">
      <MarketBar />
      <SubBar />
      <header className="flex shrink-0">
        <Toolbar />
        <div className="w-56 h-[23px] flex items-center border-y border-l border-[#c00000] whitespace-nowrap">
          <span className="w-2.5 h-[21px] bg-[#f0b050] text-[10px] leading-[10px] font-bold text-center text-[#f00]">
            T<br />R
          </span>
          <h1 className="flex items-center gap-1 pt-0.5">
            <span className="font-['Liberation_Serif'] text-[22px] leading-5 font-bold text-[#54fcfc]">601886</span>
            <span className="text-[17px] leading-5 font-bold text-[#fcfc54]">江河集团</span>
          </h1>
        </div>
      </header>
      <main className="flex-1 min-h-0 flex">
        <SideTabs />
        <Axis />
        <section className="flex-1 min-w-0 flex flex-col">
          <PriceChart />
          <Indicator />
          <DateAxis />
        </section>
        <QuotePanel />
      </main>
      <NetWidget />
      <Watermark />
    </div>
  );
};

export default App;
